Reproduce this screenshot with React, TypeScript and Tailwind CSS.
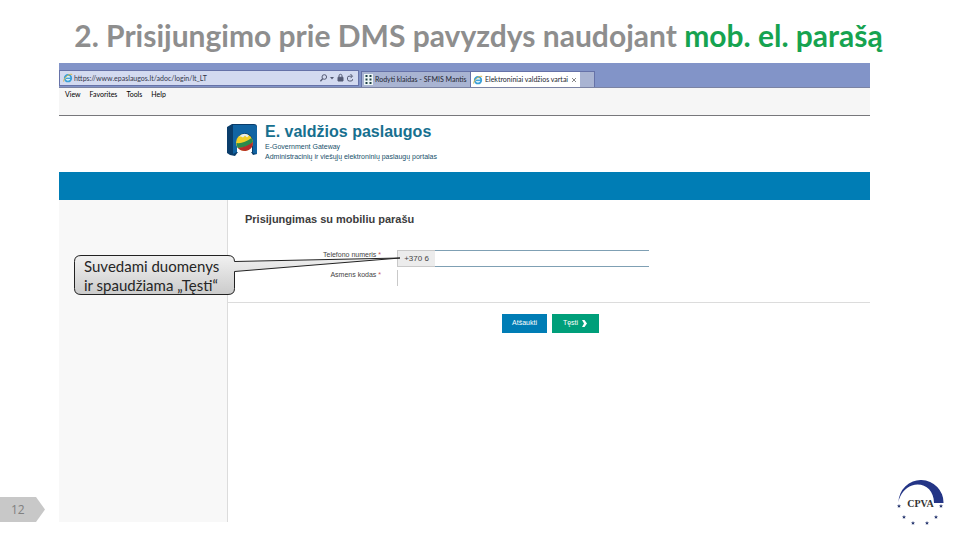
import React from "react";

function BrowserIcon() {
  return (
    <svg viewBox="0 0 10 10" className="h-[10px] w-[10px] shrink-0" aria-hidden="true">
      <circle cx="5" cy="5.2" r="3.3" fill="#d9f0fb" stroke="#3ba0d8" strokeWidth="1.7" />
      <path d="M3 5.3h5" stroke="#3ba0d8" strokeWidth="1.3" />
      <path d="M0.7 8.6C0.2 6 5 0.6 9.2 1.3" fill="none" stroke="#d9b84a" strokeWidth="1" />
    </svg>
  );
}

function AddressBar() {
  return (
    <div className="flex h-4 w-[300px] items-center border border-[#6672a8] bg-[#d3daf0] pl-[3px] pr-[3px]">
      <BrowserIcon />
      <input
        aria-label="Address"
        defaultValue="https://www.epaslaugos.lt/adoc/login/lt_LT"
        className="ml-px min-w-0 flex-1 bg-transparent font-['Lato',sans-serif] text-[7px] leading-3 text-[#33374a] outline-none"
      />
      <svg viewBox="0 0 36 10" className="h-[10px] w-9" fill="none" stroke="#555b75" aria-hidden="true">
        <circle cx="5.3" cy="4" r="2.3" />
        <path d="M3.6 5.8 1.4 8.2" strokeWidth="1.3" />
        <path d="m11 4 2 2.6L15 4z" fill="#555b75" stroke="none" />
        <path d="M19 4.3h5V8h-5z" fill="#555b75" />
        <path d="M20 4V2.8a1.5 1.5 0 0 1 3 0V4" />
        <path d="M33 3.2H30a1.5 1.5 0 0 0-1.5 1.5v1.5A1.8 1.8 0 0 0 30.3 8H32a1.6 1.6 0 0 0 1.6-1.8M31.5 1l2 2.2-2 2" />
      </svg>
    </div>
  );
}

function BrowserChrome() {
  return (
    <div>
      <div className="flex h-[25px] items-end border-b border-[#7b83a3] bg-[#8294c8]">
        <div className="pb-px">
          <AddressBar />
        </div>
        <div className="ml-[2px] flex h-4 items-stretch border-r border-t border-[#6672a8] bg-[#a9b4d2] font-['Lato',sans-serif] text-[7px] text-[#22252f]">
          <button className="flex w-[109px] items-center gap-[2px] border-l border-[#6672a8] pl-[2px]">
            <svg viewBox="0 0 9 11" className="h-[11px] w-[9px] shrink-0" aria-hidden="true">
              <path d="M0 0h9v11H0z" fill="#eef6f6" />
              <path d="M1.5 1h2v2h-2zM5.5 1h2v2h-2zM1.5 4.5h2v2h-2zM5.5 4.5h2v2h-2zM1.5 8h2v2h-2zM5.5 8h2v2h-2z" fill="#1d4146" />
            </svg>
            <span className="whitespace-nowrap">Rodyti klaidas - SFMIS Mantis</span>
          </button>
          <button className="flex w-[110px] items-center gap-[2px] border-l border-[#6672a8] bg-white pl-[2px] pr-[3px]">
            <BrowserIcon />
            <span className="whitespace-nowrap">Elektroniniai valdžios vartai</span>
            <svg viewBox="0 0 6 6" className="ml-auto h-[6px] w-[6px] shrink-0" stroke="#888" aria-hidden="true">
              <path d="m1 1 4 4M5 1 1 5" />
            </svg>
          </button>
          <span className="w-[14px]" />
        </div>
      </div>
      <nav className="flex h-7 items-start gap-[9px] border-b border-[#77777b] bg-[#f6f6f6] pl-[6px] pt-px font-['Lato',sans-serif] text-[7px] leading-[10px] text-black">
        <button>View</button>
        <button>Favorites</button>
        <button>Tools</button>
        <button>Help</button>
      </nav>
    </div>
  );
}

function PortalLogo() {
  return (
    <svg viewBox="0 0 30 32" className="h-8 w-[30px] shrink-0" aria-hidden="true">
      <path d="M0 3 5 0h22q3 0 3 3v27l-4 1-2-3H11l-3 4-5-1-3-2z" fill="#0a3d6b" />
      <path d="M6 1h21q3 0 3 3v26l-4-1V19q0-9-8-10-8 1-8 10v9l-4 2z" fill="#1164a3" />
      <path d="M10 28V19h15v9z" fill="#fff" />
      <circle cx="17.5" cy="18.5" r="8.500" fill="#f0cf28" />
      <path d="M9.500 19q7 1 15-5l1.500 4q-5 6-15.500 6z" fill="#2c8a4b" />
      <path d="M11 24q9-1 15-6-0 8-7.500 9Q13 27 11 24z" fill="#b52b2b" />
      <path d="M12 12.500q5-5 10-1l-2 2-2-2-2 2-2-1z" fill="#e8eef0" />
    </svg>
  );
}

function PortalHeader() {
  return (
    <header>
      <div className="flex h-14 items-start gap-2 pl-[168px] pt-2 font-['Liberation_Sans',Arial,sans-serif] text-[#17506a]">
        <PortalLogo />
        <div>
          <h2 className="text-[16px] font-bold leading-4 text-[#17708f]">E. valdžios paslaugos</h2>
          <p className="pt-[2px] text-[7px] leading-[10px]">E-Government Gateway</p>
          <p className="text-[7px] leading-[10px]">Administracinių ir viešųjų elektroninių paslaugų portalas</p>
        </div>
      </div>
      <div className="h-7 bg-[#007db5]" />
    </header>
  );
}

function LoginForm() {
  return (
    <form className="flex-1 font-['Liberation_Sans',Arial,sans-serif] text-[7px] text-[#444]">
      <div className="border-b border-[#dcdcdc] pb-4">
        <h3 className="pl-[17px] pt-3 text-[11px] font-bold leading-[14px] text-[#3c3c3c]">Prisijungimas su mobiliu parašu</h3>
        <div className="mt-6 grid grid-cols-[153px_252px] gap-x-4 gap-y-[3px]">
          <label htmlFor="phone" className="text-right leading-[10px]">
            Telefono numeris <span className="text-[#c55]">*</span>
          </label>
          <div className="flex h-[17px]">
            <span className="flex w-[38px] items-center justify-center border border-r-0 border-[#c9c9c9] bg-[#ececec] text-[8px]">+370 6</span>
            <input id="phone" className="min-w-0 flex-1 border-y border-[#7fa0b4] bg-white px-1 outline-none" />
          </div>
          <label htmlFor="code" className="text-right leading-[10px]">
            Asmens kodas <span className="text-[#c55]">*</span>
          </label>
          <input id="code" className="h-4 border-l border-[#c9c9c9] bg-white px-1 outline-none" />
        </div>
      </div>
      <div className="flex gap-[5px] pl-[274px] pt-[11px] text-white">
        <button type="button" className="h-[19px] w-[45px] bg-[#007db5]">Atšaukti</button>
        <button type="button" className="flex h-[19px] w-[47px] items-center justify-center gap-1 bg-[#009f7a]">
          Tęsti
          <svg viewBox="0 0 6 7" className="h-[7px] w-[6px]" aria-hidden="true">
            <path d="M0 0h2.500L5 3.500 2.500 7H0l2-3.500z" fill="#fff" />
          </svg>
        </button>
      </div>
    </form>
  );
}

function Callout() {
  return (
    <div className="absolute left-[15px] top-[54px] z-10 h-[42px] w-[327px]">
      <svg viewBox="0 0 327 42" className="absolute inset-0 h-full w-full" aria-hidden="true">
        <defs>
          <linearGradient id="shade" x1="0" y1="0" x2="0" y2="1">
            <stop offset="0" stopColor="#f1f1f1" />
            <stop offset="1" stopColor="#cbcbcb" />
          </linearGradient>
        </defs>
        <path
          d="M7 1.500H154Q160.500 1.500 160.500 7.500L326 4 160.500 17.500V34.500Q160.500 40.500 154 40.500H7Q.5 40.500 .5 34.500V7.500Q.5 1.500 7 1.500Z"
          fill="url(#shade)"
          stroke="#222"
        />
      </svg>
      <p className="relative whitespace-nowrap pl-[10px] pt-[3px] font-['Lato',sans-serif] text-[15px] leading-[19px] text-[#262626]">
        Suvedami duomenys
        <br />
        ir spaudžiama „Tęsti“
      </p>
    </div>
  );
}

function AgencyLogo() {
  const star = "M0-2 .6-.6 2-.6.9.4 1.300 1.800 0 1-1.300 1.800-.9.4-2-.6-.6-.6z";
  return (
    <svg viewBox="0 0 48 46" className="h-[46px] w-12" role="img" aria-label="CPVA">
      <path d="M1.500 22A22.500 22.500 0 0 1 46.500 23H37C37 9 26 2 15 5.500 8 8 3 14 1.500 22Z" fill="#243586" />
      <text x="23.500" y="27" textAnchor="middle" fontFamily="Liberation Serif, serif" fontSize="10" fontWeight="bold" fill="#333">
        CPVA
      </text>
      <g fill="#26366f">
        <path d={star} transform="translate(2 26)" />
        <path d={star} transform="translate(7 37)" />
        <path d={star} transform="translate(16 43)" />
        <path d={star} transform="translate(30 43)" />
        <path d={star} transform="translate(39 37)" />
        <path d={star} transform="translate(44 26)" />
      </g>
    </svg>
  );
}

export default function App() {
  return (
    <div className="flex min-h-screen flex-col bg-white pb-[18px]">
      <h1 className="flex h-[63px] items-center justify-center whitespace-nowrap pb-[10px] pr-[3px] pt-4 font-['Lato',sans-serif] text-[30px] font-bold leading-9 text-[#8e8e8e]">
        <span>
          2. Prisijungimo prie DMS pavyzdys naudojant <span className="text-[#16a350]">mob. el. parašą</span>
        </span>
      </h1>
      <div className="grid flex-1 grid-cols-[59px_1fr_90px]">
        <div className="flex items-end">
          <div className="h-[25px] w-[45px] bg-[#c8c8c8] pl-[11px] font-['Open_Sans',sans-serif] text-[12px] leading-[26px] text-[#808080] [clip-path:polygon(0_0,80%_0,100%_50%,80%_100%,0_100%)]">
            12
          </div>
        </div>
        <main className="flex flex-col">
          <BrowserChrome />
          <PortalHeader />
          <div className="relative flex flex-1">
            <aside className="w-[169px] border-r border-[#dcdcdc] bg-[#f8f8f8]" />
            <LoginForm />
            <Callout />
          </div>
        </main>
        <div className="-mb-1 flex items-end pl-[27px]">
          <AgencyLogo />
        </div>
      </div>
    </div>
  );
}
